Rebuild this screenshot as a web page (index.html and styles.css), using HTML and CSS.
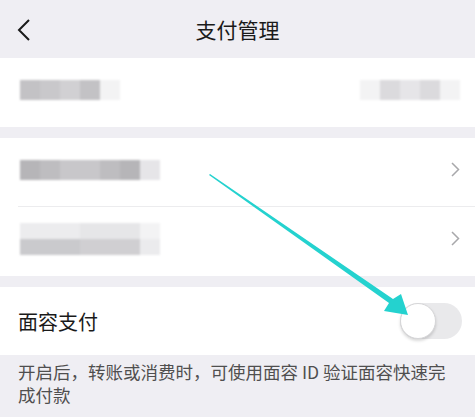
FILE: index.html
```html
<!DOCTYPE html>
<html lang="zh-CN">
<head>
    <meta charset="UTF-8">
    <meta name="viewport" content="width=device-width, initial-scale=1.0">
    <title>支付管理</title>
    <link rel="stylesheet" href="styles.css">
</head>
<body>
    <div class="page">
        <div class="header">
            <svg class="back" width="14" height="22" viewBox="0 0 14 22">
                <polyline points="12,1 2,11 12,21" fill="none" stroke="#1a1a1a" stroke-width="2"/>
            </svg>
            <h1 class="title">支付管理</h1>
        </div>

        <div class="group">
            <div class="row">
                <div class="mosaic">
                    <span class="m1"></span><span class="m2"></span><span class="m3"></span><span class="m1"></span><span class="m6"></span>
                </div>
                <div class="mosaic">
                    <span class="m6"></span><span class="m4"></span><span class="m5"></span><span class="m4"></span><span class="m6"></span>
                </div>
            </div>
        </div>

        <div class="group">
            <div class="row line">
                <div class="mosaic">
                    <span class="d1"></span><span class="d2"></span><span class="d3"></span><span class="d3"></span><span class="d2"></span><span class="d1"></span><span class="m5"></span>
                </div>
                <svg class="chev" width="9" height="15" viewBox="0 0 9 15">
                    <polyline points="1,1 7.5,7.5 1,14" fill="none" stroke="#a8a8ab" stroke-width="1.5"/>
                </svg>
            </div>
            <div class="row">
                <div class="mosaic tall">
                    <span class="l1"></span><span class="l1"></span><span class="l1"></span><span class="l2"></span><span class="l2"></span><span class="l2"></span><span class="l3"></span>
                </div>
                <svg class="chev" width="9" height="15" viewBox="0 0 9 15">
                    <polyline points="1,1 7.5,7.5 1,14" fill="none" stroke="#a8a8ab" stroke-width="1.5"/>
                </svg>
            </div>
        </div>

        <div class="group last">
            <div class="row switch-row">
                <span class="label">面容支付</span>
                <span class="switch"><span class="knob"></span></span>
            </div>
        </div>

        <p class="note">开启后，转账或消费时，可使用面容 ID 验证面容快速完成付款</p>

        <svg class="arrow" width="475" height="417" viewBox="0 0 475 417">
            <polygon points="210,174 393,299 401,294 408,315 384,311 389,303 209,175" fill="#24d2cf"/>
        </svg>
    </div>
</body>
</html>
```

FILE: styles.css
```css
body {
    margin: 0;
    background-color: #efeef3;
    font-family: "Noto Sans CJK SC", "Noto Sans", sans-serif;
    color: #1a1a1a;
}
.page {
    position: relative;
    width: 475px;
    height: 417px;
    overflow: hidden;
}
.header {
    height: 58px;
    display: flex;
    align-items: center;
    justify-content: center;
    position: relative;
}
.back {
    position: absolute;
    left: 17px;
    top: 19px;
}
.title {
    margin: 0;
    font-size: 21px;
    font-weight: normal;
    color: #1a1a1a;
}
.group {
    background-color: #fff;
    margin-bottom: 11px;
}
.group.last {
    margin-bottom: 0;
}
.row {
    height: 69px;
    display: flex;
    align-items: center;
    justify-content: space-between;
    padding: 0 15px 0 20px;
    position: relative;
}
.row.line::after {
    content: "";
    position: absolute;
    left: 18px;
    right: 0;
    bottom: 0;
    height: 1px;
    background-color: #ececee;
}
.mosaic {
    display: flex;
    filter: blur(1.2px);
    margin-top: -6px;
}
.mosaic span {
    width: 20px;
    height: 20px;
}
.mosaic.tall span {
    height: 32px;
}
.m1 { background: #c3c2c5; }
.m2 { background: #c9c8cb; }
.m3 { background: #d1d0d3; }
.m4 { background: #dbdadd; }
.m5 { background: #e6e5e8; }
.m6 { background: #f3f3f4; }
.d1 { background: #b6b5b8; }
.d2 { background: #bebdc0; }
.d3 { background: #c8c7ca; }
.l1 { background: linear-gradient(#ececee 50%, #cacacd 50%); }
.l2 { background: linear-gradient(#e6e6e8 50%, #d0cfd2 50%); }
.l3 { background: linear-gradient(#f3f3f4 50%, #ebebed 50%); }
.chev {
    margin-top: -6px;
}
.switch-row {
    height: 68px;
    padding: 0 13px 0 18px;
}
.label {
    font-size: 20px;
    color: #1a1a1a;
}
.switch {
    width: 62px;
    height: 36px;
    border-radius: 18px;
    background-color: #e9e9eb;
    position: relative;
}
.knob {
    position: absolute;
    left: 0;
    top: 0;
    width: 34px;
    height: 34px;
    border-radius: 50%;
    background-color: #fff;
    border: 1px solid #d6d6d8;
    box-shadow: 0 2px 3px rgba(0, 0, 0, 0.15);
}
.note {
    margin: 0;
    padding: 5px 18px 0 18px;
    font-size: 17.5px;
    line-height: 23px;
    color: #4f4f4f;
}
.arrow {
    position: absolute;
    left: 0;
    top: 0;
    pointer-events: none;
}
```
